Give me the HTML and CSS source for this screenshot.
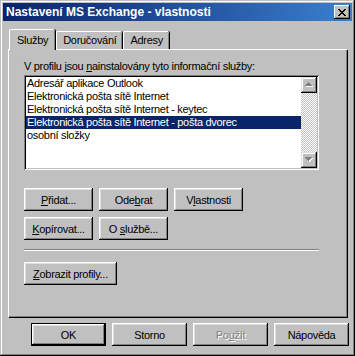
FILE: index.html
```html
<!DOCTYPE html>
<html lang="cs">
<head>
<meta charset="utf-8">
<title>Nastavení MS Exchange - vlastnosti</title>
<link rel="stylesheet" href="styles.css">
</head>
<body>
<div class="window">
  <div class="titlebar">
    <span class="title">Nastavení MS Exchange - vlastnosti</span>
    <span class="close-btn">
      <svg width="8" height="7" viewBox="0 0 8 7" shape-rendering="crispEdges">
        <path d="M0 0h2v1h-2zM6 0h2v1h-2zM1 1h2v1h-2zM5 1h2v1h-2zM2 2h4v1h-4zM3 3h2v1h-2zM2 4h4v1h-4zM1 5h2v1h-2zM5 5h2v1h-2zM0 6h2v1h-2zM6 6h2v1h-2z" fill="#000"/>
      </svg>
    </span>
  </div>
  <div class="content">
    <div class="tabs">
      <div class="tab active">Služby</div>
      <div class="tab">Doručování</div>
      <div class="tab">Adresy</div>
    </div>
    <div class="panel">
      <div class="label">V profilu jsou <u>n</u>ainstalovány tyto informační služby:</div>
      <div class="listbox">
        <div class="items">
          <div class="item">Adresář aplikace Outlook</div>
          <div class="item">Elektronická pošta sítě Internet</div>
          <div class="item">Elektronická pošta sítě Internet - keytec</div>
          <div class="item selected">Elektronická pošta sítě Internet - pošta dvorec</div>
          <div class="item">osobní složky</div>
        </div>
        <div class="scrollbar">
          <div class="sb-btn">
            <svg width="9" height="6" viewBox="0 0 9 6" shape-rendering="crispEdges">
              <path d="M4 1h1v1h1v1h1v1h1v1h-7v-1h1v-1h1v-1h1z" fill="#fff"/>
              <path d="M3 0h1v1h1v1h1v1h1v1h-7v-1h1v-1h1v-1h1z" fill="#808080"/>
            </svg>
          </div>
          <div class="sb-track"></div>
          <div class="sb-btn">
            <svg width="9" height="6" viewBox="0 0 9 6" shape-rendering="crispEdges">
              <path d="M1 1h7v1h-1v1h-1v1h-1v1h-1v-1h-1v-1h-1v-1h-1z" fill="#fff"/>
              <path d="M0 0h7v1h-1v1h-1v1h-1v1h-1v-1h-1v-1h-1v-1h-1z" fill="#808080"/>
            </svg>
          </div>
        </div>
      </div>
      <div class="btn-row first">
        <span class="btn"><span><u>P</u>řidat...</span></span>
        <span class="btn"><span>Ode<u>b</u>rat</span></span>
        <span class="btn"><span>V<u>l</u>astnosti</span></span>
      </div>
      <div class="btn-row">
        <span class="btn"><span><u>K</u>opírovat...</span></span>
        <span class="btn"><span>O <u>s</u>lužbě...</span></span>
      </div>
      <div class="separator"></div>
      <div class="btn-row profiles">
        <span class="btn wide"><span><u>Z</u>obrazit profily...</span></span>
      </div>
    </div>
    <div class="dialog-buttons">
      <span class="btn big default"><span>OK</span></span>
      <span class="btn big"><span>Storno</span></span>
      <span class="btn big disabled"><span>Po<u>u</u>žít</span></span>
      <span class="btn big"><span>Nápověda</span></span>
    </div>
  </div>
</div>
</body>
</html>
```
FILE: styles.css
```css
* { box-sizing: border-box; }
html, body { margin: 0; padding: 0; background: #c0c0c0; }
body {
  font-family: "Liberation Sans", Arial, sans-serif;
  font-size: 11px;
  letter-spacing: -0.3px;
  color: #000;
}
u { text-decoration: underline; text-underline-offset: 1px; }

.window {
  width: 355px;
  height: 356px;
  background: #c0c0c0;
  padding: 3px;
  box-shadow:
    inset -1px -1px #000,
    inset 1px 1px #c0c0c0,
    inset -2px -2px #808080,
    inset 2px 2px #fff;
  display: flex;
  flex-direction: column;
}

.titlebar {
  height: 18px;
  background: linear-gradient(to right, #0a246a 0%, #2b62b0 70%, #3a80cc 100%);
  display: flex;
  align-items: center;
  justify-content: space-between;
  padding: 0 2px 0 3px;
}
.title {
  color: #fff;
  font-weight: bold;
  font-size: 12px;
  letter-spacing: 0;
}
.close-btn {
  width: 16px;
  height: 14px;
  background: #c0c0c0;
  box-shadow:
    inset -1px -1px #000,
    inset 1px 1px #fff,
    inset -2px -2px #808080;
  display: flex;
  align-items: center;
  justify-content: center;
}

.content {
  flex: 1;
  display: flex;
  flex-direction: column;
}

.tabs {
  display: flex;
  align-items: flex-end;
  height: 28px;
  padding-left: 6px;
  position: relative;
  z-index: 1;
}
.tab {
  height: 18px;
  padding: 0 6px;
  line-height: 16px;
  border-top: 1px solid #fff;
  border-left: 1px solid #fff;
  border-top-left-radius: 2px;
  border-top-right-radius: 2px;
  box-shadow: inset -1px 0 #808080, 1px 0 #000;
  margin-right: 1px;
}
.tab.active {
  height: 21px;
  margin-bottom: -1px;
  padding: 2px 7px 0 7px;
  background: #c0c0c0;
}

.panel {
  margin-left: 5px;
  width: 339px;
  height: 268px;
  border-top: 1px solid #fff;
  border-left: 1px solid #fff;
  box-shadow: inset -1px -1px #808080, 1px 1px #000;
  padding: 10px 0 0 15px;
}

.label {
  line-height: 13px;
  height: 13px;
}

.listbox {
  margin-top: 2px;
  width: 295px;
  height: 95px;
  padding: 2px;
  background: #fff;
  box-shadow:
    inset 1px 1px #808080,
    inset -1px -1px #fff,
    inset 2px 2px #000,
    inset -2px -2px #c0c0c0;
  display: flex;
}
.items {
  flex: 1;
}
.item {
  height: 13px;
  line-height: 13px;
  padding-left: 1px;
  white-space: nowrap;
}
.item.selected {
  background: #0a246a;
  color: #fff;
}
.scrollbar {
  width: 16px;
  display: flex;
  flex-direction: column;
}
.sb-btn {
  width: 16px;
  height: 16px;
  background: #c0c0c0;
  box-shadow:
    inset -1px -1px #000,
    inset 1px 1px #dfdfdf,
    inset -2px -2px #808080,
    inset 2px 2px #fff;
  display: flex;
  align-items: center;
  justify-content: center;
}
.sb-track {
  flex: 1;
  background: repeating-conic-gradient(#c0c0c0 0 25%, #fff 0 50%) 0 0 / 2px 2px;
}

.btn-row {
  display: flex;
  gap: 6px;
  margin-top: 6px;
}
.btn-row.first { margin-top: 18px; }
.btn-row.profiles { margin-top: 11px; }

.btn {
  width: 69px;
  height: 23px;
  display: flex;
  align-items: center;
  justify-content: center;
  background: #c0c0c0;
  box-shadow:
    inset -1px -1px #000,
    inset 1px 1px #fff,
    inset -2px -2px #808080,
    inset 2px 2px #dfdfdf;
  white-space: nowrap;
}
.btn.wide { width: 93px; }
.btn.big { width: 75px; }
.btn.default {
  box-shadow:
    inset 0 0 0 1px #000,
    inset -2px -2px #000,
    inset 2px 2px #fff,
    inset -3px -3px #808080,
    inset 3px 3px #dfdfdf;
}
.btn.disabled {
  color: #808080;
  text-shadow: 1px 1px #fff;
}

.separator {
  margin-top: 9px;
  width: 295px;
  height: 2px;
  border-top: 1px solid #808080;
  border-bottom: 1px solid #fff;
}

.dialog-buttons {
  display: flex;
  justify-content: flex-end;
  gap: 6px;
  padding-right: 3px;
  margin-top: 6px;
}
```
